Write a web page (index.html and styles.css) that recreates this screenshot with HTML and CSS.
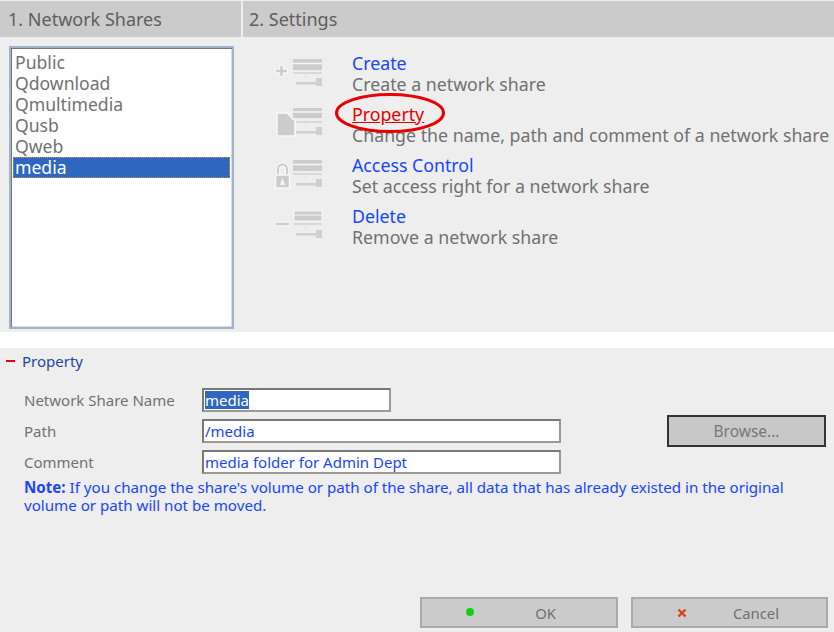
FILE: index.html
```html
<!DOCTYPE html>
<html lang="en">
<head>
<meta charset="utf-8">
<title>Network Shares</title>
<link rel="stylesheet" href="styles.css">
</head>
<body>
<section class="top">
  <div class="heads">
    <div class="head head-left">1. Network Shares</div>
    <div class="head head-right">2. Settings</div>
  </div>
  <div class="columns">
    <div class="list-wrap">
      <ul class="list">
        <li>Public</li>
        <li>Qdownload</li>
        <li>Qmultimedia</li>
        <li>Qusb</li>
        <li>Qweb</li>
        <li class="selected">media</li>
      </ul>
    </div>
    <div class="settings">
      <div class="setting">
        <svg class="icon" viewBox="0 0 50 34">
          <path d="M7.500 8v12M1 14h13" stroke="#f8f8f8" stroke-width="5"/>
          <path d="M7.500 9v10M2 14h11" stroke="#ccc" stroke-width="2.500"/>
          <path d="M19 2h29v11H19z" fill="#ccc"/><path d="M19 6.500h29" stroke="#f6f6f6" stroke-width="1.500"/>
          <path d="M19 16h29" stroke="#c4c4c4"/><path d="M32 16v5" stroke="#ddd"/>
          <path d="M22 25h20v2.500H22zM42 21h6v8h-6z" fill="#cfcfcf"/>
        </svg>
        <div class="setting-text"><a class="link">Create</a><p>Create a network share</p></div>
      </div>
      <div class="setting">
        <svg class="icon" viewBox="0 0 50 34">
          <path d="M3 5h10l8 8v15H3z" fill="#ccc" stroke="#f8f8f8" stroke-width="1.500"/>
          <path d="M19 0h29v10H19z" fill="#ccc"/><path d="M19 4h29" stroke="#f6f6f6" stroke-width="1.500"/>
          <path d="M22 14h26" stroke="#c4c4c4"/><path d="M32 14v5" stroke="#ddd"/>
          <path d="M22 23h20v2.500H22zM42 19h6v8h-6z" fill="#cfcfcf"/>
        </svg>
        <div class="setting-text"><a class="link link-active">Property</a><p>Change the name, path and comment of a network share</p></div>
      </div>
      <div class="setting">
        <svg class="icon" viewBox="0 0 50 34">
          <path d="M4 16V10a4.500 4.500 0 0 1 9 0v6" fill="none" stroke="#f8f8f8" stroke-width="4"/>
          <path d="M4 16V10a4.500 4.500 0 0 1 9 0v6" fill="none" stroke="#ccc" stroke-width="2"/>
          <path d="M1.500 16h14v13h-14z" fill="#ccc" stroke="#f8f8f8" stroke-width="1.500"/>
          <path d="M8.500 19l2.500 7H6z" fill="#f6f6f6"/>
          <path d="M19 1h29v11H19z" fill="#ccc"/><path d="M19 5.500h29" stroke="#f6f6f6" stroke-width="1.500"/>
          <path d="M19 15h29" stroke="#c4c4c4"/><path d="M32 15v5" stroke="#ddd"/>
          <path d="M22 24h20v2.500H22zM42 20h6v8h-6z" fill="#cfcfcf"/>
        </svg>
        <div class="setting-text"><a class="link">Access Control</a><p>Set access right for a network share</p></div>
      </div>
      <div class="setting">
        <svg class="icon" viewBox="0 0 50 34">
          <path d="M1 14h15" stroke="#f8f8f8" stroke-width="5"/>
          <path d="M2 14h13" stroke="#ccc" stroke-width="2.500"/>
          <path d="M20 1h28v10H20z" fill="#ccc" stroke="#f6f6f6"/><path d="M20 5h28" stroke="#f6f6f6" stroke-width="1"/>
          <path d="M20 14h28" stroke="#c4c4c4"/><path d="M32 14v5" stroke="#ddd"/>
          <path d="M22 23h20v2.500H22zM42 20h6v8h-6z" fill="#cfcfcf"/>
        </svg>
        <div class="setting-text"><a class="link">Delete</a><p>Remove a network share</p></div>
      </div>
      <svg class="callout" viewBox="0 0 110 40"><ellipse cx="55" cy="20" rx="53.500" ry="18.500" fill="none" stroke="#e80000" stroke-width="3"/></svg>
    </div>
  </div>
</section>
<section class="bottom">
  <h2 class="panel-title"><span class="minus"></span>Property</h2>
  <div class="form">
    <div class="row">
      <label class="row-label">Network Share Name</label>
      <div class="field field-short"><span class="sel">media</span></div>
    </div>
    <div class="row">
      <label class="row-label">Path</label>
      <div class="field">/media</div>
      <button class="browse">Browse...</button>
    </div>
    <div class="row">
      <label class="row-label">Comment</label>
      <div class="field">media folder for Admin Dept</div>
    </div>
    <p class="note"><b>Note:</b> If you change the share's volume or path of the share, all data that has already existed in the original volume or path will not be moved.</p>
  </div>
  <div class="actions">
    <button class="action"><span class="dot"></span><span class="action-label">OK</span></button>
    <button class="action"><svg class="cross" viewBox="0 0 10 10"><path d="M1.500 1.500l7 7M8.500 1.500l-7 7" stroke="#d8401a" stroke-width="2.400"/></svg><span class="action-label">Cancel</span></button>
  </div>
</section>
</body>
</html>
```
FILE: styles.css
```css
* { box-sizing: border-box; }
html, body { margin: 0; padding: 0; background: #fff; }
body {
  width: 834px;
  height: 632px;
  overflow: hidden;
  font-family: "Noto Sans", "DejaVu Sans", sans-serif;
  font-size: 17.750px;
  color: #717171;
  display: flex;
  flex-direction: column;
}
.top { height: 332px; background: #eee; padding-top: 1px; }
.heads { display: flex; gap: 2px; height: 36px; }
.head {
  background: #cbcbcb;
  color: #5e5e5e;
  font-size: 18px;
  line-height: 36px;
  padding-left: 8px;
}
.head-left { width: 241px; }
.head-right { flex: 1; padding-left: 6px; }
.columns { display: flex; }
.list-wrap { width: 243px; padding: 9px 0 0 9px; }
.list {
  list-style: none;
  margin: 0;
  padding: 4px 1px 0 2px;
  width: 225px;
  height: 283px;
  background: #fff;
  border: 2px solid #9db4cc;
  box-shadow: inset 1px 1px 0 #777, inset -1px -1px 0 #ddd;
}
.list li { height: 21px; line-height: 21px; padding-left: 2px; margin-right: 1px; font-size: 17.600px; }
.list .selected {
  background: #2f66c0;
  color: #fff;
  outline: 1px dotted #c8963c;
  outline-offset: -1px;
}
.settings { position: relative; flex: 1; padding-top: 16px; }
.setting { display: flex; height: 51px; }
.icon { width: 50px; height: 34px; margin: 4px 0 0 31px; flex: none; filter: blur(.6px); }
.setting-text { margin-left: 27px; padding-left: 1px; line-height: 21px; white-space: nowrap; }
.setting-text p { margin: 0; }
.link { color: #1746ff; display: block; }
.link-active { color: #e60000; text-decoration: underline; }
.callout { position: absolute; left: 92px; top: 56px; width: 110px; height: 40px; }
.bottom { margin-top: 16px; flex: 1; background: #eee; position: relative; display: flex; flex-direction: column; }
.panel-title {
  margin: 0;
  font-size: 15px;
  font-weight: 400;
  color: #1d45a8;
  line-height: 20px;
  padding: 3px 0 0 6px;
  display: flex;
  align-items: center;
}
.minus { width: 9px; height: 2px; background: #f00000; margin-right: 7px; }
.form { padding: 13px 0 0 24px; }
.row { display: flex; align-items: center; height: 31px; font-size: 15px; }
.row-label { width: 178px; color: #717171; }
.field {
  width: 359px;
  height: 24px;
  background: #fff;
  border: 2px solid #777;
  border-right-color: #999;
  border-bottom-color: #999;
  color: #1746ff;
  line-height: 20px;
  padding-left: 1px;
  white-space: nowrap;
}
.field-short { width: 189px; }
.sel { background: #2f66c0; color: #fff; display: inline-block; line-height: 18px; }
.browse {
  margin-left: 106px;
  width: 159px;
  height: 32px;
  background: #c8c8c8;
  border: 2px solid #333;
  color: #777;
  font: inherit;
  font-size: 15.500px;
}
.note { margin: 1px 0 0; color: #1746ff; font-size: 15.140px; line-height: 18px; width: 790px; }
.note b { font-weight: 700; }
.actions { margin-top: auto; display: flex; gap: 13px; padding: 0 0 4px 420px; }
.action {
  width: 198px;
  height: 31px;
  background: #cbcbcb;
  border: 2px solid #aaa;
  color: #707070;
  font: inherit;
  font-size: 14.800px;
  position: relative;
  padding: 0;
}
.action + .action { width: 197px; }
.dot { position: absolute; left: 44px; top: 9px; width: 8px; height: 8px; border-radius: 50%; background: #10d010; }
.cross { position: absolute; left: 44px; top: 9px; width: 10px; height: 10px; }
.action-label { display: block; padding-left: 53px; }
```
